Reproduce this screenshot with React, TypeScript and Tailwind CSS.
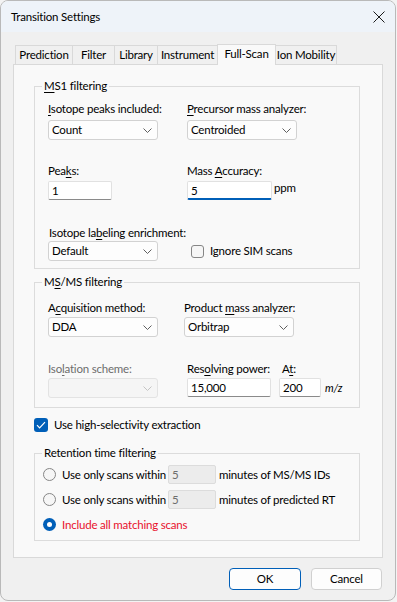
import React from "react";

const font = { fontFamily: 'Lato, "Noto Sans", sans-serif' };

function Chevron({ disabled }: { disabled?: boolean }) {
  return (
    <svg width="9" height="5" viewBox="0 0 9 5" className="shrink-0">
      <path d="M0.5 0.5L4.5 4.5L8.5 0.5" fill="none" stroke={disabled ? "#c4c4c4" : "#5f5f5f"} strokeWidth="1" />
    </svg>
  );
}

function Combo({ value, disabled }: { value?: string; disabled?: boolean }) {
  return (
    <div
      className={`flex items-center justify-between w-[110px] h-[20px] pl-[3px] pr-[5px] rounded-[3px] border ${
        disabled ? "bg-[#f5f5f5] border-[#e3e3e3]" : "bg-[#fdfdfd] border-[#d2d2d2]"
      }`}
    >
      <span className="leading-[18px]">{value}</span>
      <Chevron disabled={disabled} />
    </div>
  );
}

function TextBox({
  value,
  w,
  focused,
  disabled,
}: {
  value: string;
  w: string;
  focused?: boolean;
  disabled?: boolean;
}) {
  if (disabled) {
    return (
      <div className={`${w} h-[19px] pl-[3px] rounded-[2px] bg-[#ececec] border border-[#dcdcdc] text-[#6d6d6d] leading-[17px] shrink-0`}>
        {value}
      </div>
    );
  }
  return (
    <div
      className={`${w} h-[19px] pl-[3px] rounded-[2px] bg-white border border-[#e1e1e1] shrink-0 ${
        focused ? "border-b-2 border-b-[#005fb8] leading-[17px]" : "border-b-[#8a8a8a] leading-[17px]"
      }`}
    >
      {value}
    </div>
  );
}

function Label({ children, gray }: { children: React.ReactNode; gray?: boolean }) {
  return <div className={`leading-[16px] whitespace-nowrap ${gray ? "text-[#6d6d6d]" : ""}`}>{children}</div>;
}

function U({ children }: { children: React.ReactNode }) {
  return <span className="underline underline-offset-[2px] decoration-1">{children}</span>;
}

function Radio({ checked }: { checked?: boolean }) {
  if (checked) {
    return (
      <div className="w-[13px] h-[13px] rounded-full bg-[#005fb8] flex items-center justify-center shrink-0">
        <div className="w-[5px] h-[5px] rounded-full bg-white" />
      </div>
    );
  }
  return <div className="w-[13px] h-[13px] rounded-full border border-[#868686] bg-[#f6f6f6] shrink-0" />;
}

function Group({ title, children, className }: { title: React.ReactNode; children: React.ReactNode; className?: string }) {
  return (
    <div className={`relative border border-[#dcdcdc] w-[326px] ${className ?? ""}`}>
      <div className="absolute left-[7px] -top-[9px] px-[2px] bg-[#f9f9f9] leading-[16px] whitespace-nowrap">{title}</div>
      {children}
    </div>
  );
}

const tabs = ["Prediction", "Filter", "Library", "Instrument", "Full-Scan", "Ion Mobility"];
const tabW = ["w-[58px]", "w-[43px]", "w-[44px]", "w-[61px]", "w-[59px]", "w-[62px]"];

export default function App() {
  return (
    <div className="w-[397px] h-[602px] bg-[#f3f3f3] text-[11.5px] tracking-[-0.2px] text-black whitespace-nowrap" style={font}>
      <div className="w-[396px] h-[601px] rounded-[8px] border border-[#b9b9b9] bg-[#f0f0f0] overflow-hidden flex flex-col">
        {/* Title bar */}
        <div className="h-[31px] bg-[#eef3f9] flex items-center justify-between pl-[10px] pr-[9px] shrink-0">
          <span>Transition Settings</span>
          <svg width="12" height="12" viewBox="0 0 12 12" className="mr-[1px]">
            <path d="M0.5 0.5L11.5 11.5M11.5 0.5L0.5 11.5" stroke="#1b1b1b" strokeWidth="1" />
          </svg>
        </div>

        {/* Tab control */}
        <div className="ml-[12px] mt-[11px] flex flex-col">
          <div className="flex items-end h-[21px] pl-[2px]">
            {tabs.map((t, i) =>
              t === "Full-Scan" ? (
                <div
                  key={t}
                  className={`${tabW[i]} h-[21px] bg-[#f9f9f9] border border-b-0 border-[#d9d9d9] -ml-[1px] flex justify-center pt-[1px] leading-[16px] relative z-10 -mb-[1px]`}
                >
                  {t}
                </div>
              ) : (
                <div
                  key={t}
                  className={`${tabW[i]} h-[19px] bg-[#f0f0f0] border border-b-0 border-[#d9d9d9] -ml-[1px] first:ml-0 flex justify-center pt-[1px] leading-[16px]`}
                >
                  {t}
                </div>
              )
            )}
          </div>

          {/* Tab page */}
          <div className="w-[370px] h-[494px] bg-[#f9f9f9] border border-[#d9d9d9] pl-[20px] pt-[21px] flex flex-col">
            <Group title={<><U>M</U>S1 filtering</>}>
              <div className="pl-[13px] pt-[14px] pb-[7px] flex flex-col">
                <div className="flex">
                  <div className="w-[139px] flex flex-col gap-[3px]">
                    <Label><U>I</U>sotope peaks included:</Label>
                    <Combo value="Count" />
                  </div>
                  <div className="flex flex-col gap-[3px]">
                    <Label><U>P</U>recursor mass analyzer:</Label>
                    <Combo value="Centroided" />
                  </div>
                </div>
                <div className="flex mt-[23px]">
                  <div className="w-[139px] flex flex-col gap-[2px]">
                    <Label>Pea<U>k</U>s:</Label>
                    <TextBox value="1" w="w-[64px]" />
                  </div>
                  <div className="flex flex-col gap-[2px]">
                    <Label>Mass <U>A</U>ccuracy:</Label>
                    <div className="flex items-start">
                      <TextBox value="5" w="w-[85px]" focused />
                      <span className="ml-[2px] leading-[14px]">ppm</span>
                    </div>
                  </div>
                </div>
                <div className="flex mt-[25px] items-end">
                  <div className="w-[143px] flex flex-col">
                    <Label><span className="pl-[1px]">Isotope la<U>b</U>eling enrichment:</span></Label>
                    <Combo value="Default" />
                  </div>
                  <div className="flex items-center gap-[6px] mb-[3px]">
                    <div className="w-[13px] h-[13px] rounded-[3px] border border-[#868686] bg-[#f6f6f6]" />
                    <span className="leading-[14px]">Ignore SIM scans</span>
                  </div>
                </div>
              </div>
            </Group>

            <Group title={<>M<U>S</U>/MS filtering</>} className="mt-[13px]">
              <div className="pl-[13px] pt-[17px] pb-[9px] flex flex-col">
                <div className="flex">
                  <div className="w-[136px] flex flex-col gap-[1px]">
                    <Label>A<U>c</U>quisition method:</Label>
                    <Combo value="DDA" />
                  </div>
                  <div className="flex flex-col gap-[1px]">
                    <Label>Product <U>m</U>ass analyzer:</Label>
                    <Combo value="Orbitrap" />
                  </div>
                </div>
                <div className="flex mt-[24px]">
                  <div className="w-[139px] flex flex-col gap-[1px]">
                    <Label gray>Iso<U>l</U>ation scheme:</Label>
                    <Combo disabled />
                  </div>
                  <div className="w-[92px] flex flex-col gap-[1px]">
                    <Label>Res<U>o</U>lving power:</Label>
                    <TextBox value="15,000" w="w-[84px]" />
                  </div>
                  <div className="flex flex-col gap-[1px]">
                    <Label><span className="pl-[3px]">A<U>t</U>:</span></Label>
                    <div className="flex items-center">
                      <TextBox value="200" w="w-[42px]" />
                      <span className="ml-[4px] italic text-[11px] leading-[19px]">m/z</span>
                    </div>
                  </div>
                </div>
              </div>
            </Group>

            <div className="flex items-center gap-[6px] mt-[10px] h-[14px]">
              <div className="w-[14px] h-[14px] rounded-[3px] bg-[#005fb8] flex items-center justify-center">
                <svg width="10" height="8" viewBox="0 0 10 8">
                  <path d="M1 4.2L3.6 6.8L9 1.2" fill="none" stroke="white" strokeWidth="1.2" />
                </svg>
              </div>
              <span className="leading-[14px]">Use high-selectivity extraction</span>
            </div>

            <Group title="Retention time filtering" className="mt-[21px]">
              <div className="pl-[8px] pt-[11px] pb-[6px] flex flex-col gap-[6px]">
                <div className="flex items-center h-[19px]">
                  <Radio />
                  <span className="ml-[6px] w-[106px]">Use only scans within</span>
                  <TextBox value="5" w="w-[48px]" disabled />
                  <span className="ml-[3px]">minutes of MS/MS IDs</span>
                </div>
                <div className="flex items-center h-[19px]">
                  <Radio />
                  <span className="ml-[6px] w-[106px]">Use only scans within</span>
                  <TextBox value="5" w="w-[48px]" disabled />
                  <span className="ml-[3px]">minutes of predicted RT</span>
                </div>
                <div className="flex items-center h-[19px]">
                  <Radio checked />
                  <span className="ml-[6px] text-[#e8112d]">Include all matching scans</span>
                </div>
              </div>
            </Group>
          </div>
        </div>

        {/* Buttons */}
        <div className="flex justify-end gap-[10px] mt-[10px] pr-[13px]">
          <button className="w-[72px] h-[22px] rounded-[4px] bg-[#fdfdfd] border border-[#005fb8] leading-[18px]">
            OK
          </button>
          <button className="w-[71px] h-[22px] rounded-[4px] bg-[#fdfdfd] border border-[#d0d0d0] leading-[18px]">
            Cancel
          </button>
        </div>
      </div>
    </div>
  );
}
